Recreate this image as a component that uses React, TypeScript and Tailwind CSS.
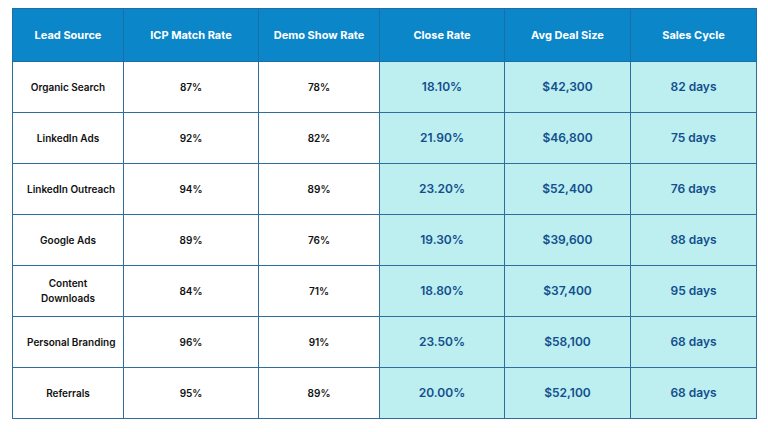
const headers = ["Lead Source", "ICP Match Rate", "Demo Show Rate", "Close Rate", "Avg Deal Size", "Sales Cycle"];

const rows = [
  ["Organic Search", "87%", "78%", "18.10%", "$42,300", "82 days"],
  ["LinkedIn Ads", "92%", "82%", "21.90%", "$46,800", "75 days"],
  ["LinkedIn Outreach", "94%", "89%", "23.20%", "$52,400", "76 days"],
  ["Google Ads", "89%", "76%", "19.30%", "$39,600", "88 days"],
  ["Content Downloads", "84%", "71%", "18.80%", "$37,400", "95 days"],
  ["Personal Branding", "96%", "91%", "23.50%", "$58,100", "68 days"],
  ["Referrals", "95%", "89%", "20.00%", "$52,100", "68 days"],
];

const widths = ["w-[111px]", "w-[135px]", "w-[121px]", "w-[125px]", "w-[126px]", "w-[126px]"];

export default function App() {
  return (
    <div className="h-[432px] w-[768px] bg-white pl-[12px] pt-[8px] font-['Inter',sans-serif]">
      <table className="w-[744px] table-fixed border-collapse">
        <colgroup>
          {widths.map((w, i) => (
            <col key={i} className={w} />
          ))}
        </colgroup>
        <thead>
          <tr className="h-[53px] bg-[#0a86c9]">
            {headers.map((h) => (
              <th
                key={h}
                className="border-[1.5px] border-[#1d6ea6] px-1 text-center text-[11px] font-bold text-white"
              >
                {h}
              </th>
            ))}
          </tr>
        </thead>
        <tbody>
          {rows.map((r) => (
            <tr key={r[0]} className="h-[51px]">
              {r.map((cell, i) =>
                i < 3 ? (
                  <td
                    key={i}
                    className={`border-[1.5px] border-[#2f6e9c] bg-white text-center text-[10px] font-semibold leading-[15px] text-[#111] ${
                      i === 0 ? "px-[14px]" : "px-1"
                    }`}
                  >
                    {i === 0 && cell === "Content Downloads" ? (
                      <>
                        Content
                        <br />
                        Downloads
                      </>
                    ) : i === 0 ? (
                      <span className="whitespace-nowrap">{cell}</span>
                    ) : (
                      cell
                    )}
                  </td>
                ) : (
                  <td
                    key={i}
                    className="border-[1.5px] border-[#2f6e9c] bg-[#bdeef0] px-1 text-center text-[12px] font-semibold text-[#124f8c]"
                  >
                    {cell}
                  </td>
                )
              )}
            </tr>
          ))}
        </tbody>
      </table>
    </div>
  );
}
